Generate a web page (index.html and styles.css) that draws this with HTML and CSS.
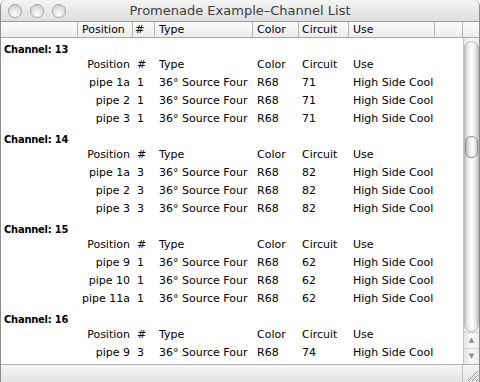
FILE: index.html
```html
<!DOCTYPE html>
<html lang="en">
<head>
  <meta charset="UTF-8" />
  <title>Promenade Example–Channel List</title>
  <link rel="stylesheet" href="styles.css">
</head>
<body>
  <div class="window">
    <div class="titlebar">
      <div class="lights">
        <span class="light"></span>
        <span class="light"></span>
        <span class="light"></span>
      </div>
      <div class="title">Promenade Example–Channel List</div>
      <div></div>
    </div>

    <div class="header">
      <div class="hcell w-lead"></div>
      <div class="hcell w-pos">Position</div>
      <div class="hcell w-num">#</div>
      <div class="hcell w-type">Type</div>
      <div class="hcell w-color">Color</div>
      <div class="hcell w-circ">Circuit</div>
      <div class="hcell w-use">Use</div>
      <div class="hcell w-extra"></div>
      <div class="hcell w-corner"></div>
    </div>

    <div class="body">
      <div class="list" id="list"></div>
      <div class="scrollbar">
        <div class="track">
          <div class="rail">
            <div class="thumb"></div>
          </div>
        </div>
        <div class="arrow">&#9650;</div>
        <div class="arrow">&#9660;</div>
      </div>
    </div>

    <div class="footer">
      <div class="footer-fill"></div>
      <div class="grip">
        <svg width="16" height="16" viewBox="0 0 16 16">
          <path d="M5 15 L15 5 M9 15 L15 9 M13 15 L15 13" stroke="#8a8a8a" stroke-width="1" fill="none"/>
          <path d="M6 15 L15 6 M10 15 L15 10" stroke="#ffffff" stroke-width="1" fill="none"/>
        </svg>
      </div>
    </div>
  </div>

  <script>
    const channels = [
      { num: '13', rows: [['pipe 1a', '1', '71'], ['pipe 2', '1', '71'], ['pipe 3', '1', '71']] },
      { num: '14', rows: [['pipe 1a', '3', '82'], ['pipe 2', '3', '82'], ['pipe 3', '3', '82']] },
      { num: '15', rows: [['pipe 9', '1', '62'], ['pipe 10', '1', '62'], ['pipe 11a', '1', '62']] },
      { num: '16', rows: [['pipe 9', '3', '74'], ['pipe 10', '3', '74'], ['pipe 11a', '3', '74']] }
    ];

    const list = document.getElementById('list');

    function addRow(group, cells) {
      const row = document.createElement('div');
      row.className = 'row';
      cells.forEach((text, i) => {
        const cell = document.createElement('div');
        cell.className = i === 0 ? 'cell pos' : 'cell';
        cell.textContent = text;
        row.appendChild(cell);
      });
      group.appendChild(row);
    }

    channels.forEach(ch => {
      const group = document.createElement('div');
      group.className = 'group';

      const label = document.createElement('div');
      label.className = 'channel';
      label.textContent = 'Channel: ' + ch.num;
      group.appendChild(label);

      addRow(group, ['Position', '#', 'Type', 'Color', 'Circuit', 'Use']);
      ch.rows.forEach(r => {
        addRow(group, [r[0], r[1], '36° Source Four', 'R68', r[2], 'High Side Cool']);
      });

      list.appendChild(group);
    });
  </script>
</body>
</html>
```

FILE: styles.css
```css
body {
  margin: 0;
  background: #ffffff;
  font-family: "DejaVu Sans", sans-serif;
  font-size: 11px;
  color: #000;
}
.window {
  width: 480px;
  height: 382px;
  display: flex;
  flex-direction: column;
  overflow: hidden;
  border-radius: 6px 6px 0 0;
  box-sizing: border-box;
  border-left: 1px solid #8c8c8c;
  border-right: 1px solid #8c8c8c;
}
.titlebar {
  height: 21px;
  flex: none;
  display: grid;
  grid-template-columns: 72px 1fr 72px;
  align-items: center;
  background: linear-gradient(#f4f4f4, #dedede);
  border-bottom: 1px solid #9c9c9c;
}
.lights {
  display: flex;
  gap: 8px;
  padding-left: 7px;
}
.light {
  width: 12px;
  height: 12px;
  border-radius: 50%;
  border: 1px solid #a4a4a4;
  background: radial-gradient(circle at 50% 80%, #ffffff 0%, #e6e6e6 45%, #c8c8c8 100%);
  box-sizing: content-box;
}
.title {
  text-align: center;
  font-size: 13px;
  color: #3c3c3c;
  white-space: nowrap;
}
.header {
  height: 15px;
  flex: none;
  display: flex;
  background: linear-gradient(#fbfbfb, #ececec);
  border-bottom: 1px solid #a8a8a8;
}
.hcell {
  box-sizing: border-box;
  border-right: 1px solid #b4b4b4;
  padding-left: 4px;
  line-height: 15px;
  white-space: nowrap;
}
.w-lead { width: 77px; }
.w-pos { width: 55px; }
.w-num { width: 22px; padding-left: 2px; }
.w-type { width: 98px; }
.w-color { width: 46px; }
.w-circ { width: 50px; padding-left: 3px; }
.w-use { width: 86px; }
.w-extra { width: 28px; }
.w-corner { flex: 1; border-right: none; }
.body {
  flex: 1;
  display: flex;
  min-height: 0;
}
.list {
  flex: 1;
  overflow: hidden;
  padding-top: 2px;
}
.group {
  margin-bottom: 2px;
}
.channel {
  height: 16px;
  box-sizing: border-box;
  padding-top: 3px;
  line-height: 13px;
  padding-left: 3px;
  font-family: "DejaVu Sans Condensed", "DejaVu Sans", sans-serif;
  font-weight: bold;
  font-size: 11px;
  letter-spacing: -0.2px;
}
.row {
  display: grid;
  grid-template-columns: 130px 28px 98px 45px 51px 1fr;
  height: 18px;
  line-height: 18px;
  white-space: nowrap;
}
.cell {
  overflow: hidden;
}
.cell.pos {
  text-align: right;
  padding-right: 1px;
}
.row .cell:nth-child(2) {
  padding-left: 6px;
}
.scrollbar {
  width: 15px;
  flex: none;
  display: flex;
  flex-direction: column;
  border-left: 1px solid #c4c4c4;
  background: linear-gradient(to right, #e4e4e4, #f8f8f8 50%, #ececec);
}
.track {
  flex: 1;
  display: flex;
  padding: 3px 0 0;
}
.rail {
  flex: 1;
  border-radius: 8px;
  border: 1px solid #b8b8b8;
  background: linear-gradient(to right, #c9c9c9, #ededed 25%, #ffffff 55%, #e2e2e2 85%, #c4c4c4);
  padding-top: 94px;
  display: flex;
  justify-content: center;
  align-items: flex-start;
}
.thumb {
  width: 11px;
  height: 20px;
  border-radius: 6px;
  border: 1px solid #8e8e8e;
  background: linear-gradient(to right, #bcbcbc, #f2f2f2 40%, #ffffff 60%, #cfcfcf);
}
.arrow {
  height: 15px;
  flex: none;
  font-size: 7px;
  line-height: 15px;
  text-align: center;
  color: #8c8c8c;
  border-top: 1px solid #d0d0d0;
}
.footer {
  height: 17px;
  flex: none;
  display: flex;
  border-top: 1px solid #b0b0b0;
  background: linear-gradient(#f6f6f6, #e2e2e2);
}
.footer-fill {
  flex: 1;
}
.grip {
  width: 16px;
  display: flex;
  align-items: flex-end;
  border-left: 1px solid #c4c4c4;
}
```
